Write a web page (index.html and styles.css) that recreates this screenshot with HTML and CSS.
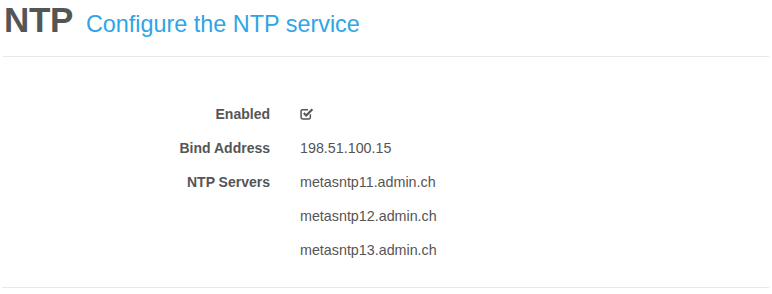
FILE: index.html
```html
<!DOCTYPE html>
<html>
<head>
<meta charset="utf-8">
<link rel="stylesheet" href="styles.css">
</head>
<body>
<div class="page">
  <div class="page-header">
    <h1 class="title">NTP <small class="subtitle">Configure the NTP service</small></h1>
  </div>
  <dl class="details">
    <dt>Enabled</dt>
    <dd><svg class="check" width="14" height="13" viewBox="0 0 13 12"><path d="M9.6 6.6v3.1a1.3 1.3 0 0 1-1.3 1.3H2.3A1.3 1.3 0 0 1 1 9.7V3.8a1.3 1.3 0 0 1 1.3-1.3h5.2" fill="none" stroke="#555" stroke-width="1.4"/><path d="M3.5 5.6l2.2 2.2 5.8-5.8" fill="none" stroke="#555" stroke-width="2"/></svg></dd>
    <dt>Bind Address</dt>
    <dd>198.51.100.15</dd>
    <dt>NTP Servers</dt>
    <dd>metasntp11.admin.ch</dd>
    <dt class="empty"></dt>
    <dd>metasntp12.admin.ch</dd>
    <dt class="empty"></dt>
    <dd>metasntp13.admin.ch</dd>
  </dl>
  <hr class="rule">
</div>
</body>
</html>
```
FILE: styles.css
```css
html, body {
  margin: 0;
  padding: 0;
  background: #fff;
}
body {
  font-family: "Liberation Sans", Arial, Helvetica, sans-serif;
  color: #555555;
}
.page {
  padding: 0 3px 0 3px;
}
.page-header {
  border-bottom: 1px solid #e8e8e8;
  padding: 0 0 13px 1px;
}
.title {
  margin: 0;
  padding-top: 1px;
  font-size: 35px;
  line-height: 38px;
  font-weight: bold;
  color: #555555;
  letter-spacing: -0.3px;
}
.subtitle {
  font-size: 23.4px;
  font-weight: normal;
  color: #2fa4e7;
  letter-spacing: 0;
  margin-left: 4px;
}
.details {
  display: grid;
  grid-template-columns: 267px 1fr;
  column-gap: 30px;
  row-gap: 0;
  margin: 40px 0 0 0;
  font-size: 14px;
  line-height: 34px;
}
.details dt {
  font-weight: bold;
  text-align: right;
  margin: 0;
  height: 34px;
}
.details dd {
  margin: 0;
  height: 34px;
  display: flex;
  align-items: center;
  font-size: 14.3px;
}
.check {
  display: block;
  margin-top: -1px;
}
.rule {
  border: 0;
  border-top: 1px solid #e8e8e8;
  margin: 20px 0 0 -1px;
}
```
